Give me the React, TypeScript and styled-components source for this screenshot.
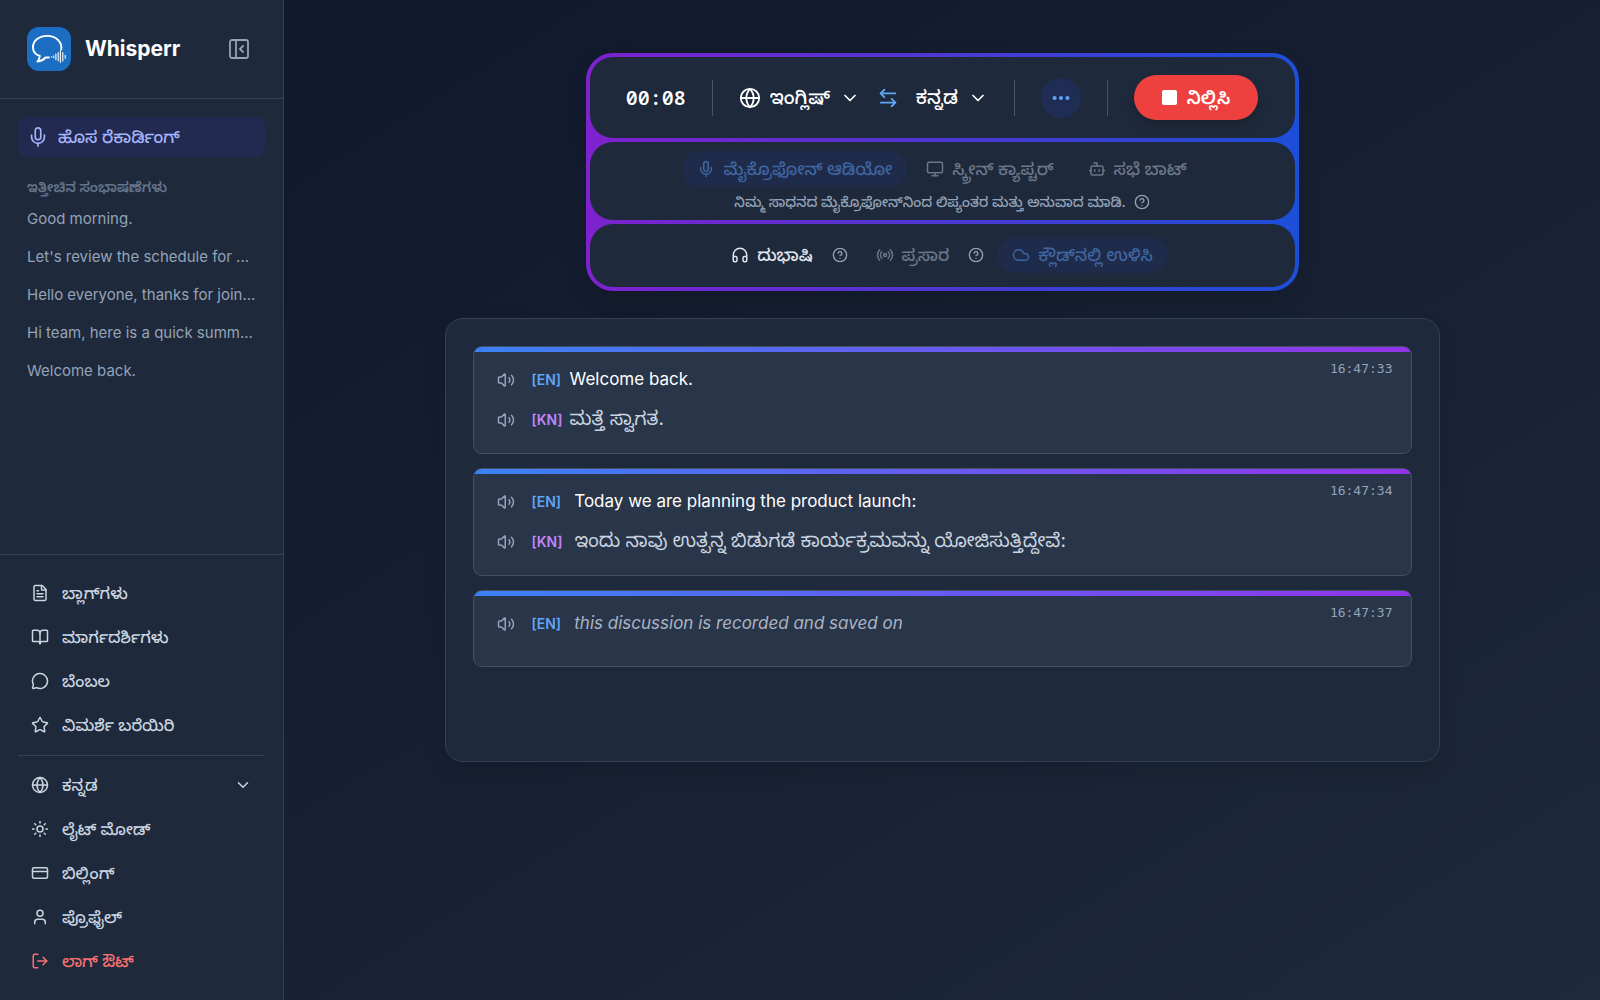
import React from "react";
import styled, { createGlobalStyle, css } from "styled-components";
import {
  ArrowLeftRight,
  BookOpen,
  Bot,
  ChevronDown,
  CircleHelp,
  Cloud,
  CreditCard,
  Ellipsis,
  FileText,
  Globe,
  Headphones,
  LogOut,
  MessageCircle,
  Mic,
  Monitor,
  PanelLeftClose,
  Radio,
  Star,
  Sun,
  User,
  Volume2,
} from "lucide-react";

const GlobalStyle = createGlobalStyle`
  *, *::before, *::after { box-sizing: border-box; }
  body {
    margin: 0;
    background: #0f172a;
    color: #fff;
    font-family: Inter, "Noto Sans Kannada", "Noto Sans", sans-serif;
    font-size: 17px;
    line-height: 24px;
  }
  button, select {
    font: inherit;
    color: inherit;
    background: none;
    border: 0;
    padding: 0;
    margin: 0;
    cursor: pointer;
  }
  select { appearance: none; outline: none; }
  a { color: inherit; text-decoration: none; }
  ul { list-style: none; margin: 0; padding: 0; }
  h1, h2, p { margin: 0; }
  svg { flex: none; display: block; }
`;

const Page = styled.div`
  display: flex;
  min-height: 100vh;
  background: linear-gradient(to bottom right, #0f172a, #1e293b);
`;

const Sidebar = styled.aside`
  display: flex;
  flex-direction: column;
  flex: none;
  width: 284px;
  background: #1e293b;
  border-right: 1px solid #334155;
`;

const Brand = styled.header`
  display: flex;
  align-items: center;
  gap: 14px;
  padding: 27px 32px 27px 27px;
  border-bottom: 1px solid #334155;
`;

const BrandName = styled.h1`
  flex: 1;
  font-size: 21px;
  line-height: 44px;
  font-weight: 700;
`;

const IconButton = styled.button`
  display: grid;
  place-items: center;
  color: #94a3b8;
`;

const History = styled.section`
  flex: 1;
  padding: 18px;
`;

const NewRecording = styled.button`
  display: flex;
  align-items: center;
  gap: 9px;
  width: 100%;
  height: 40px;
  padding: 0 9px;
  border-radius: 9px;
  background: #232a50;
  color: #a5b4fc;
  font-weight: 500;
`;

const SectionTitle = styled.h2`
  margin: 18px 0 1px;
  padding: 0 9px;
  color: #64748b;
  font-size: 14px;
  line-height: 24px;
  font-weight: 600;
`;

const HistoryLink = styled.a`
  display: block;
  padding: 7px 9px;
  color: #94a3b8;
  font-size: 15px;
  overflow: hidden;
  white-space: nowrap;
  text-overflow: ellipsis;
`;

const Nav = styled.nav`
  padding: 16px 18px 17px;
  border-top: 1px solid #334155;
  color: #cbd5e1;
  font-size: 16px;
  font-weight: 500;
`;

const navItem = css`
  display: flex;
  align-items: center;
  gap: 13px;
  width: 100%;
  height: 44px;
  padding: 0 13px;
  text-align: left;
`;

const NavLink = styled.a`
  ${navItem}
`;

const NavButton = styled.button<{ $danger?: boolean }>`
  ${navItem}
  ${(p) => p.$danger && "color: #f87171;"}
`;

const NavSelect = styled.label`
  ${navItem}
  select { flex: 1; }
`;

const NavDivider = styled.hr`
  height: 1px;
  margin: 8px 0 7px;
  border: 0;
  background: #334155;
`;

const Main = styled.main`
  display: flex;
  flex: 1;
  flex-direction: column;
  align-items: center;
  gap: 27px;
  min-width: 0;
  padding: 53px 36px;
`;

const Controls = styled.section`
  display: flex;
  flex-direction: column;
  gap: 4px;
  width: 100%;
  max-width: 713px;
  padding: 4px;
  border-radius: 27px;
  background: linear-gradient(to right, #7e22ce, #1d4ed8);
  box-shadow: 0 10px 20px rgba(0, 0, 0, 0.15);
`;

const ControlCard = styled.div<{ $pad: string }>`
  display: flex;
  flex-direction: column;
  align-items: center;
  padding: ${(p) => p.$pad};
  border-radius: 23px;
  background: #1e293b;
`;

const ControlRow = styled.div<{ $gap?: number }>`
  display: flex;
  align-items: center;
  justify-content: center;
  gap: ${(p) => p.$gap ?? 0}px;
`;

const Timer = styled.time`
  font-family: "Noto Sans Mono", "DejaVu Sans Mono", monospace;
  font-size: 20px;
  font-weight: 600;
`;

const Separator = styled.span`
  width: 1px;
  height: 36px;
  background: #475569;
`;

const Languages = styled.div`
  display: flex;
  align-items: center;
  gap: 17px;
  font-size: 19px;
  font-weight: 500;
`;

const LanguagePicker = styled.label`
  display: flex;
  align-items: center;
  gap: 9px;
`;

const SwapButton = styled(IconButton)`
  color: #60a5fa;
`;

const MoreButton = styled(IconButton)`
  width: 40px;
  height: 40px;
  border-radius: 50%;
  background: #1f2d55;
  color: #60a5fa;
`;

const StopButton = styled.button`
  display: flex;
  align-items: center;
  gap: 10px;
  height: 45px;
  padding: 0 28px;
  border-radius: 23px;
  background: #ef4040;
  font-size: 18px;
  font-weight: 600;
  box-shadow: 0 6px 12px rgba(0, 0, 0, 0.14);
`;

const StopSquare = styled.span`
  width: 15px;
  height: 15px;
  border-radius: 2px;
  background: #fff;
`;

const Option = styled.button<{ $tone: "selected" | "muted" | "plain" }>`
  display: flex;
  align-items: center;
  gap: 8px;
  height: 36px;
  padding: 0 15px;
  border-radius: 18px;
  font-weight: 500;
  color: ${(p) => ({ selected: "#3f66a0", muted: "#6b7789", plain: "#e2e8f0" })[p.$tone]};
  background: ${(p) => (p.$tone === "selected" ? "#1e2b4a" : "transparent")};
`;

const OptionWithHelp = styled.div`
  display: flex;
  align-items: center;
  gap: 4px;
  margin-right: 9px;
`;

const Hint = styled.p`
  display: flex;
  align-items: center;
  gap: 8px;
  margin-top: 3px;
  color: #94a3b8;
  font-size: 14px;
  line-height: 24px;
  font-weight: 500;
`;

const Transcript = styled.section`
  display: flex;
  flex-direction: column;
  gap: 14px;
  width: 100%;
  max-width: 995px;
  min-height: 444px;
  padding: 27px;
  border: 1px solid #334155;
  border-radius: 18px;
  background: #1e293b;
  box-shadow: 0 10px 20px rgba(0, 0, 0, 0.12);
`;

const Entry = styled.article`
  display: flex;
  justify-content: space-between;
  overflow: hidden;
  min-height: 77px;
  padding: 0 18px 18px 23px;
  border: 1px solid #435166;
  border-radius: 9px;
  background:
    linear-gradient(to right, #3b82f6, #9333ea) top / 100% 5px no-repeat,
    #293548;
`;

const Lines = styled.div`
  display: flex;
  flex-direction: column;
  gap: 8px;
  padding-top: 16px;
`;

const Line = styled.div`
  display: flex;
  align-items: center;
  height: 32px;
`;

const PlayButton = styled(IconButton)`
  padding-top: 1px;
`;

const LangTag = styled.span<{ $translated: boolean }>`
  width: 38px;
  margin-left: 17px;
  padding-top: 1px;
  font-size: 14px;
  font-weight: 600;
  color: ${(p) => (p.$translated ? "#c084fc" : "#60a5fa")};
`;

const Speech = styled.p<{ $translated?: boolean; $draft?: boolean }>`
  white-space: pre-wrap;
  font-size: ${(p) => (p.$translated ? 19 : 17)}px;
  line-height: 28px;
  color: ${(p) => (p.$translated ? "#cbd5e1" : p.$draft ? "#a9b4c4" : "#fff")};
  font-style: ${(p) => (p.$draft ? "italic" : "normal")};
`;

const Stamp = styled.time`
  padding-top: 10px;
  color: #94a3b8;
  font-family: "DejaVu Sans Mono", monospace;
  font-size: 13px;
`;

const Logo = () => (
  <svg width="44" height="44" viewBox="0 0 44 44" fill="none" stroke="#fff" strokeLinecap="round" strokeLinejoin="round">
    <rect width="44" height="44" rx="12" fill="#1b6ec2" stroke="none" />
    <path
      strokeWidth="1.9"
      d="M34.2 22.6C35.4 14.5 28.6 8.9 20.3 8.9 12.2 8.9 6 13.6 6 20.2c0 4.2 2.4 7.4 6.8 8.8-.2 2-1 3.9-2.4 5.6 3.500-.5 6.200-1.900 8.200-4.100h3.400"
    />
    <path strokeWidth="1.1" d="M24.700 29.500v.4M26.800 28.700v2M28.900 26.700v6M31.200 25.600v8.200M33.400 23.900v11.600M35.800 25.500v8.400M38.200 28.200v3" />
  </svg>
);

const history = [
  "Good morning.",
  "Let's review the schedule for ...",
  "Hello everyone, thanks for join...",
  "Hi team, here is a quick summ...",
  "Welcome back.",
];

const links = [
  { icon: FileText, label: "ಬ್ಲಾಗ್‌ಗಳು" },
  { icon: BookOpen, label: "ಮಾರ್ಗದರ್ಶಿಗಳು" },
  { icon: MessageCircle, label: "ಬೆಂಬಲ" },
  { icon: Star, label: "ವಿಮರ್ಶೆ ಬರೆಯಿರಿ" },
];

const account = [
  { icon: Sun, label: "ಲೈಟ್ ಮೋಡ್" },
  { icon: CreditCard, label: "ಬಿಲ್ಲಿಂಗ್" },
  { icon: User, label: "ಪ್ರೊಫೈಲ್" },
  { icon: LogOut, label: "ಲಾಗ್ ಔಟ್", danger: true },
];

const entries = [
  { time: "16:47:33", source: "Welcome back.", target: "ಮತ್ತೆ ಸ್ವಾಗತ." },
  {
    time: "16:47:34",
    source: " Today we are planning the product launch:",
    target: " ಇಂದು ನಾವು ಉತ್ಪನ್ನ ಬಿಡುಗಡೆ ಕಾರ್ಯಕ್ರಮವನ್ನು ಯೋಜಿಸುತ್ತಿದ್ದೇವೆ:",
  },
  { time: "16:47:37", source: " this discussion is recorded and saved on" },
];

function Language({ name, icon }: { name: string; icon?: boolean }) {
  return (
    <LanguagePicker>
      {icon && <Globe size={22} />}
      <select aria-label={name}>
        <option>{name}</option>
      </select>
      <ChevronDown size={20} />
    </LanguagePicker>
  );
}

function HelpButton() {
  return (
    <IconButton aria-label="ಸಹಾಯ">
      <CircleHelp size={16} />
    </IconButton>
  );
}

export default function App() {
  return (
    <>
      <GlobalStyle />
      <Page>
        <Sidebar>
          <Brand>
            <Logo />
            <BrandName>Whisperr</BrandName>
            <IconButton aria-label="Close sidebar">
              <PanelLeftClose size={24} strokeWidth={1.8} />
            </IconButton>
          </Brand>
          <History>
            <NewRecording>
              <Mic size={22} strokeWidth={1.8} />
              ಹೊಸ ರೆಕಾರ್ಡಿಂಗ್
            </NewRecording>
            <SectionTitle>ಇತ್ತೀಚಿನ ಸಂಭಾಷಣೆಗಳು</SectionTitle>
            <ul>
              {history.map((title) => (
                <li key={title}>
                  <HistoryLink href="#">{title}</HistoryLink>
                </li>
              ))}
            </ul>
          </History>
          <Nav>
            {links.map(({ icon: Icon, label }) => (
              <NavLink href="#" key={label}>
                <Icon size={18} />
                {label}
              </NavLink>
            ))}
            <NavDivider />
            <NavSelect>
              <Globe size={18} />
              <select aria-label="ಕನ್ನಡ">
                <option>ಕನ್ನಡ</option>
              </select>
              <ChevronDown size={18} />
            </NavSelect>
            {account.map(({ icon: Icon, label, danger }) => (
              <NavButton key={label} $danger={danger}>
                <Icon size={18} />
                {label}
              </NavButton>
            ))}
          </Nav>
        </Sidebar>

        <Main>
          <Controls>
            <ControlCard $pad="18px">
              <ControlRow $gap={26}>
                <Timer>00:08</Timer>
                <Separator />
                <Languages>
                  <Language name="ಇಂಗ್ಲಿಷ್" icon />
                  <SwapButton aria-label="Swap languages">
                    <ArrowLeftRight size={22} />
                  </SwapButton>
                  <Language name="ಕನ್ನಡ" />
                </Languages>
                <Separator />
                <MoreButton aria-label="More">
                  <Ellipsis size={22} strokeWidth={2.5} />
                </MoreButton>
                <Separator />
                <StopButton>
                  <StopSquare />
                  ನಿಲ್ಲಿಸಿ
                </StopButton>
              </ControlRow>
            </ControlCard>
            <ControlCard $pad="9px 18px 6px">
              <ControlRow $gap={4}>
                <Option $tone="selected">
                  <Mic size={18} />
                  ಮೈಕ್ರೊಫೋನ್ ಆಡಿಯೋ
                </Option>
                <Option $tone="muted">
                  <Monitor size={18} />
                  ಸ್ಕ್ರೀನ್ ಕ್ಯಾಪ್ಚರ್
                </Option>
                <Option $tone="muted">
                  <Bot size={18} />
                  ಸಭೆ ಬಾಟ್
                </Option>
              </ControlRow>
              <Hint>
                ನಿಮ್ಮ ಸಾಧನದ ಮೈಕ್ರೊಫೋನ್‌ನಿಂದ ಲಿಪ್ಯಂತರ ಮತ್ತು ಅನುವಾದ ಮಾಡಿ.
                <HelpButton />
              </Hint>
            </ControlCard>
            <ControlCard $pad="13px 18px 14px">
              <ControlRow $gap={4}>
                <OptionWithHelp>
                  <Option $tone="plain">
                    <Headphones size={18} />
                    ದುಭಾಷಿ
                  </Option>
                  <HelpButton />
                </OptionWithHelp>
                <OptionWithHelp>
                  <Option $tone="muted">
                    <Radio size={18} />
                    ಪ್ರಸಾರ
                  </Option>
                  <HelpButton />
                </OptionWithHelp>
                <Option $tone="selected">
                  <Cloud size={18} />
                  ಕ್ಲೌಡ್‌ನಲ್ಲಿ ಉಳಿಸಿ
                </Option>
              </ControlRow>
            </ControlCard>
          </Controls>

          <Transcript>
            {entries.map(({ time, source, target }) => (
              <Entry key={time}>
                <Lines>
                  <Line>
                    <PlayButton aria-label="Play">
                      <Volume2 size={18} />
                    </PlayButton>
                    <LangTag $translated={false}>[EN]</LangTag>
                    <Speech $draft={!target}>{source}</Speech>
                  </Line>
                  {target && (
                    <Line>
                      <PlayButton aria-label="Play">
                        <Volume2 size={18} />
                      </PlayButton>
                      <LangTag $translated>[KN]</LangTag>
                      <Speech $translated>{target}</Speech>
                    </Line>
                  )}
                </Lines>
                <Stamp>{time}</Stamp>
              </Entry>
            ))}
          </Transcript>
        </Main>
      </Page>
    </>
  );
}
